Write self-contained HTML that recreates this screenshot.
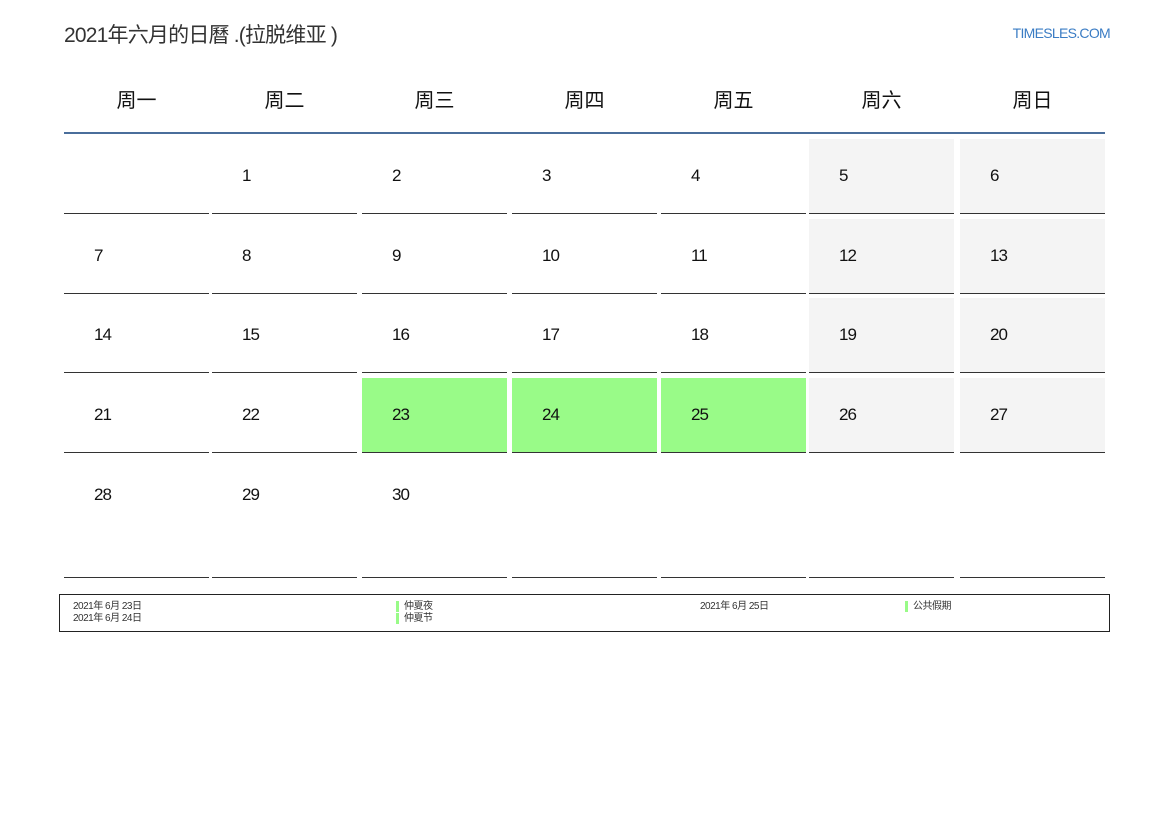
<!DOCTYPE html>
<html><head><meta charset="utf-8"><style>
body{margin:0;width:1169px;height:827px;background:#fff;font-family:"Liberation Sans","Noto Sans CJK SC",sans-serif;position:relative;overflow:hidden}
.a{position:absolute}
.t{left:64px;top:19px;font-size:21px;color:#333;letter-spacing:-0.8px}
.brand{right:59px;top:25px;font-size:14px;color:#3a7cc4;letter-spacing:-0.7px}
.h{top:84px;width:145px;text-align:center;font-size:20px;color:#111}
.hl{left:64px;top:132px;width:1041px;height:2px;background:#4a6e9b}
.c{border-bottom:1px solid #333;box-sizing:border-box}
.c span{position:absolute;left:30px;top:27px;font-size:17px;color:#111;letter-spacing:-1px}
.w{background:#f4f4f4}.g{background:#99fb88}
.lg{left:59px;top:594px;width:1049px;height:36px;border:1px solid #222;font-size:10px;color:#333;letter-spacing:-0.5px}
.lg div{position:absolute;line-height:12px}
.bar{padding-left:8px}
.bar:before{content:"";position:absolute;left:0;top:0;width:3px;height:11px;background:#99fb88}
</style></head><body>
<div class="a t">2021年六月的日曆 .(拉脱维亚 )</div>
<div class="a brand">TIMESLES.COM</div>
<div class="a h" style="left:64px">周一</div>
<div class="a h" style="left:212px">周二</div>
<div class="a h" style="left:362px">周三</div>
<div class="a h" style="left:512px">周四</div>
<div class="a h" style="left:661px">周五</div>
<div class="a h" style="left:809px">周六</div>
<div class="a h" style="left:960px">周日</div>
<div class="a hl"></div>
<div id="grid"></div>
<script>
var xs=[64,212,362,512,661,809,960],ys=[139,219,298,378,458],hs=[75,75,75,75,120],h='';
var green={23:1,24:1,25:1};
for(var r=0;r<5;r++)for(var c=0;c<7;c++){var d=r*7+c;var cls='c';if(c>=5&&r<4)cls+=' w';if(green[d])cls+=' g';
h+='<div class="a '+cls+'" style="left:'+xs[c]+'px;top:'+ys[r]+'px;width:145px;height:'+hs[r]+'px">'+((d>=1&&d<=30)?'<span>'+d+'</span>':'')+'</div>';}
document.getElementById('grid').innerHTML=h;
</script>
<div class="a lg">
<div style="left:13px;top:6px">2021年 6月 23日</div>
<div style="left:13px;top:18px">2021年 6月 24日</div>
<div class="bar" style="left:336px;top:6px">仲夏夜</div>
<div class="bar" style="left:336px;top:18px">仲夏节</div>
<div style="left:640px;top:6px">2021年 6月 25日</div>
<div class="bar" style="left:845px;top:6px">公共假期</div>
</div>
</body></html>
